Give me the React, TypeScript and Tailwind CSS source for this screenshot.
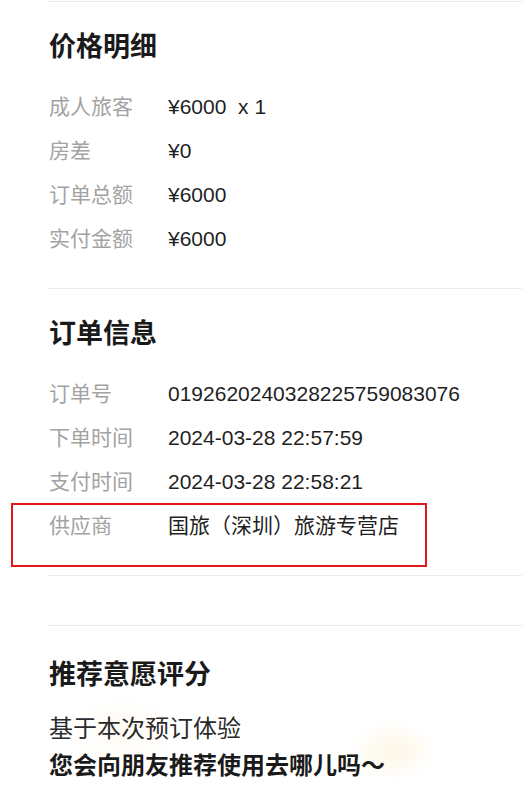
import React from "react";

const font = { fontFamily: '"Liberation Sans", "Noto Sans CJK SC", sans-serif' };

type Row = { label: string; value: string };

const priceRows: Row[] = [
    { label: "成人旅客", value: "¥6000  x 1" },
    { label: "房差", value: "¥0" },
    { label: "订单总额", value: "¥6000" },
    { label: "实付金额", value: "¥6000" },
];

const orderRows: Row[] = [
    { label: "订单号", value: "0192620240328225759083076" },
    { label: "下单时间", value: "2024-03-28 22:57:59" },
    { label: "支付时间", value: "2024-03-28 22:58:21" },
];

function InfoRow({ row }: { row: Row }) {
    return (
        <div className="flex items-center h-[44px] text-[21px]">
            <span className="w-[119px] shrink-0 text-[#a3a3a3]">{row.label}</span>
            <span className="text-[#1f1f1f] whitespace-pre">{row.value}</span>
        </div>
    );
}

function Heading({ children }: { children: React.ReactNode }) {
    return <h2 className="text-[27px] leading-[36px] font-bold text-[#1a1a1a]">{children}</h2>;
}

export default function App() {
    return (
        <div className="relative w-[522px] h-[798px] bg-white overflow-hidden" style={font}>
            {/* 价格明细 */}
            <div className="ml-[48px] mt-[1px] border-t border-[#ececec] pt-[27px] pb-[27px] pl-[1px]">
                <Heading>价格明细</Heading>
                <div className="mt-[20px]">
                    {priceRows.map(r => <InfoRow key={r.label} row={r} />)}
                </div>
            </div>

            {/* 订单信息 */}
            <div className="relative ml-[48px] border-t border-[#ececec] pt-[27px] pb-[27px] pl-[1px]">
                <Heading>订单信息</Heading>
                <div className="mt-[20px]">
                    {orderRows.map(r => <InfoRow key={r.label} row={r} />)}
                    <InfoRow row={{ label: "供应商", value: "国旅（深圳）旅游专营店" }} />
                </div>
                {/* 标注框 */}
                <div className="absolute left-[-37px] top-[214px] w-[416px] h-[64px] border-2 border-[#e0181b] pointer-events-none" />
            </div>

            <div className="ml-[48px] border-t border-[#ececec] h-[50px]" />

            {/* 推荐意愿评分 */}
            <div className="relative ml-[48px] border-t border-[#ececec] pt-[31px] pl-[1px]">
                <div className="absolute left-[300px] top-[95px] w-[90px] h-[60px] rounded-full bg-[radial-gradient(closest-side,rgba(250,230,180,0.35),rgba(255,255,255,0))]" />
                <div className="absolute left-[20px] top-[70px] w-[110px] h-[70px] rounded-full bg-[radial-gradient(closest-side,rgba(250,238,200,0.25),rgba(255,255,255,0))]" />
                <div className="relative">
                    <Heading>推荐意愿评分</Heading>
                    <p className="mt-[17px] text-[24px] leading-[37px] text-[#2b2b2b]">基于本次预订体验</p>
                    <p className="text-[24px] leading-[37px] font-bold text-[#1a1a1a]">您会向朋友推荐使用去哪儿吗～</p>
                </div>
            </div>
        </div>
    );
}
